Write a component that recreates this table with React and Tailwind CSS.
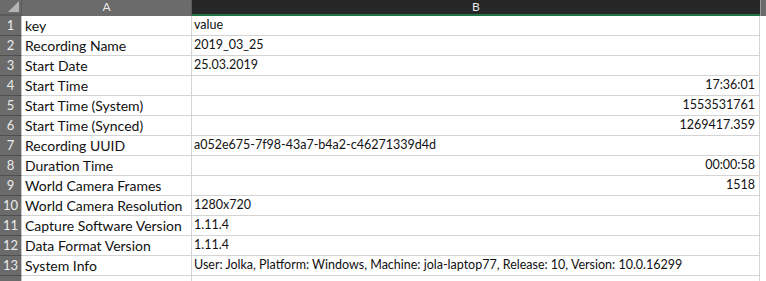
const rows = [
  ['key', 'value', false],
  ['Recording Name', '2019_03_25', false],
  ['Start Date', '25.03.2019', false],
  ['Start Time', '17:36:01', true],
  ['Start Time (System)', '1553531761', true],
  ['Start Time (Synced)', '1269417.359', true],
  ['Recording UUID', 'a052e675-7f98-43a7-b4a2-c46271339d4d', false],
  ['Duration Time', '00:00:58', true],
  ['World Camera Frames', '1518', true],
  ['World Camera Resolution', '1280x720', false],
  ['Capture Software Version', '1.11.4', false],
  ['Data Format Version', '1.11.4', false],
  ['System Info', 'User: Jolka, Platform: Windows, Machine: jola-laptop77, Release: 10, Version: 10.0.16299', false],
  ['', '', false],
]

export default function App() {
  return (
    <div className="h-[281px] w-[766px] overflow-hidden bg-white font-['Lato',sans-serif] text-[#111]">
      <div className="grid grid-cols-[22px_170px_568px_6px]">
        {/* header row */}
        <div className="relative h-4 border-b-2 border-r border-[#5a5a5a] bg-[#6b6b6b]">
          <div className="absolute bottom-[2px] right-[2px] h-0 w-0 border-b-[11px] border-l-[11px] border-b-[#b4b4b4] border-l-transparent" />
        </div>
        <div className="flex h-4 items-center justify-center border-b-2 border-r border-[#6b6b6b] border-r-[#5a5a5a] bg-[#6b6b6b] text-[12px] leading-none text-[#e8e8e8]">
          A
        </div>
        <div className="flex h-4 items-center justify-center border-b-2 border-[#217346] bg-[#262626] text-[12px] leading-none text-[#e8e8e8]">
          B
        </div>
        <div className="h-4 border-l border-[#9a9a9a] bg-[#6b6b6b]" />

        {rows.map(([k, v, right], i) => (
          <div key={i} className="contents">
            <div className="flex h-5 items-center justify-center border-b border-r border-[#4f4f4f] border-r-[#c8c8c8] bg-[#6b6b6b] text-[13px] text-[#ececec]">
              {i < 13 ? i + 1 : ''}
            </div>
            <div className="flex h-5 items-center whitespace-nowrap border-b border-r border-[#d4d4d4] pl-[3px] text-[14px]">
              {k}
            </div>
            <div
              className={`flex h-5 items-center whitespace-nowrap border-b border-r border-[#d4d4d4] text-[12.5px] ${right ? 'justify-end pr-[4px]' : 'justify-start pl-[2px]'}`}
            >
              {v}
            </div>
            <div className="h-5 bg-white" />
          </div>
        ))}
      </div>
    </div>
  )
}
